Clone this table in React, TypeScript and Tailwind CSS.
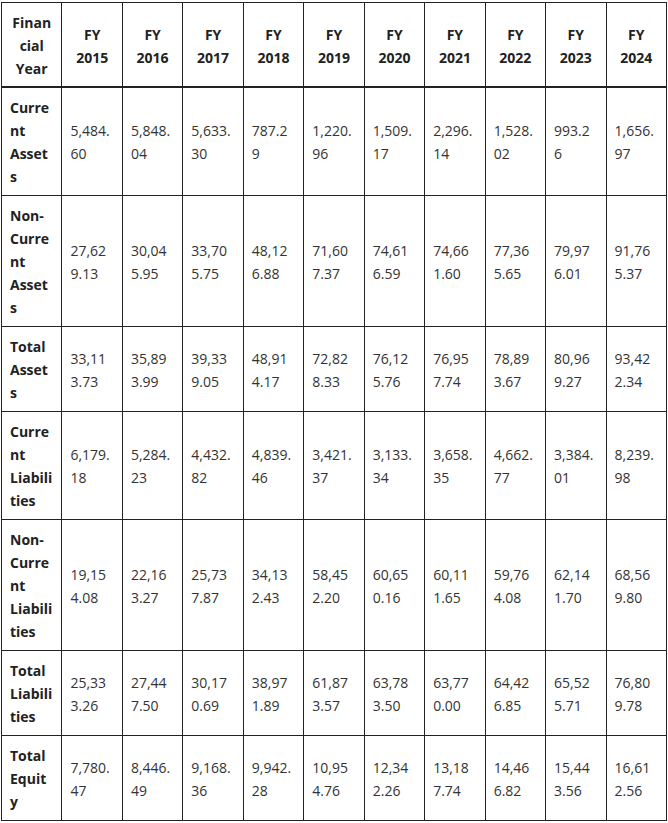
import React from "react";

const years = ["2015", "2016", "2017", "2018", "2019", "2020", "2021", "2022", "2023", "2024"];

const rows: [string, string[]][] = [
  ["Current Assets", ["5,484.60", "5,848.04", "5,633.30", "787.29", "1,220.96", "1,509.17", "2,296.14", "1,528.02", "993.26", "1,656.97"]],
  ["Non-Current Assets", ["27,629.13", "30,045.95", "33,705.75", "48,126.88", "71,607.37", "74,616.59", "74,661.60", "77,365.65", "79,976.01", "91,765.37"]],
  ["Total Assets", ["33,113.73", "35,893.99", "39,339.05", "48,914.17", "72,828.33", "76,125.76", "76,957.74", "78,893.67", "80,969.27", "93,422.34"]],
  ["Current Liabilities", ["6,179.18", "5,284.23", "4,432.82", "4,839.46", "3,421.37", "3,133.34", "3,658.35", "4,662.77", "3,384.01", "8,239.98"]],
  ["Non-Current Liabilities", ["19,154.08", "22,163.27", "25,737.87", "34,132.43", "58,452.20", "60,650.16", "60,111.65", "59,764.08", "62,141.70", "68,569.80"]],
  ["Total Liabilities", ["25,333.26", "27,447.50", "30,170.69", "38,971.89", "61,873.57", "63,783.50", "63,770.00", "64,426.85", "65,525.71", "76,809.78"]],
  ["Total Equity", ["7,780.47", "8,446.49", "9,168.36", "9,942.28", "10,954.76", "12,342.26", "13,187.74", "14,466.82", "15,443.56", "16,612.56"]],
];

export default function App() {
  return (
    <div className="bg-white w-[668px] h-[823px] pt-[2px] pl-[1px]" style={{ fontFamily: '"Open Sans", "Noto Sans", sans-serif' }}>
      <table className="table-fixed border-collapse w-[666px] text-[14px] leading-[23px] text-[#333]">
        <thead>
          <tr>
            <th className="border border-[#222] border-b-2 px-2 pt-2 pb-[6px] font-bold text-center text-[#222] break-words align-middle">
              Financial Year
            </th>
            {years.map((y) => (
              <th key={y} className="border border-[#222] border-b-2 px-2 pt-2 pb-[6px] font-bold text-center text-[#222] break-words align-middle">
                FY {y}
              </th>
            ))}
          </tr>
        </thead>
        <tbody>
          {rows.map(([label, vals]) => (
            <tr key={label}>
              <td className="border border-[#222] px-2 pt-2 pb-[7px] font-bold text-left text-[#222] break-words align-middle">
                {label}
              </td>
              {vals.map((v, i) => (
                <td key={i} className="border border-[#222] px-2 pt-2 pb-[7px] text-left break-words align-middle">
                  {v}
                </td>
              ))}
            </tr>
          ))}
        </tbody>
      </table>
    </div>
  );
}
